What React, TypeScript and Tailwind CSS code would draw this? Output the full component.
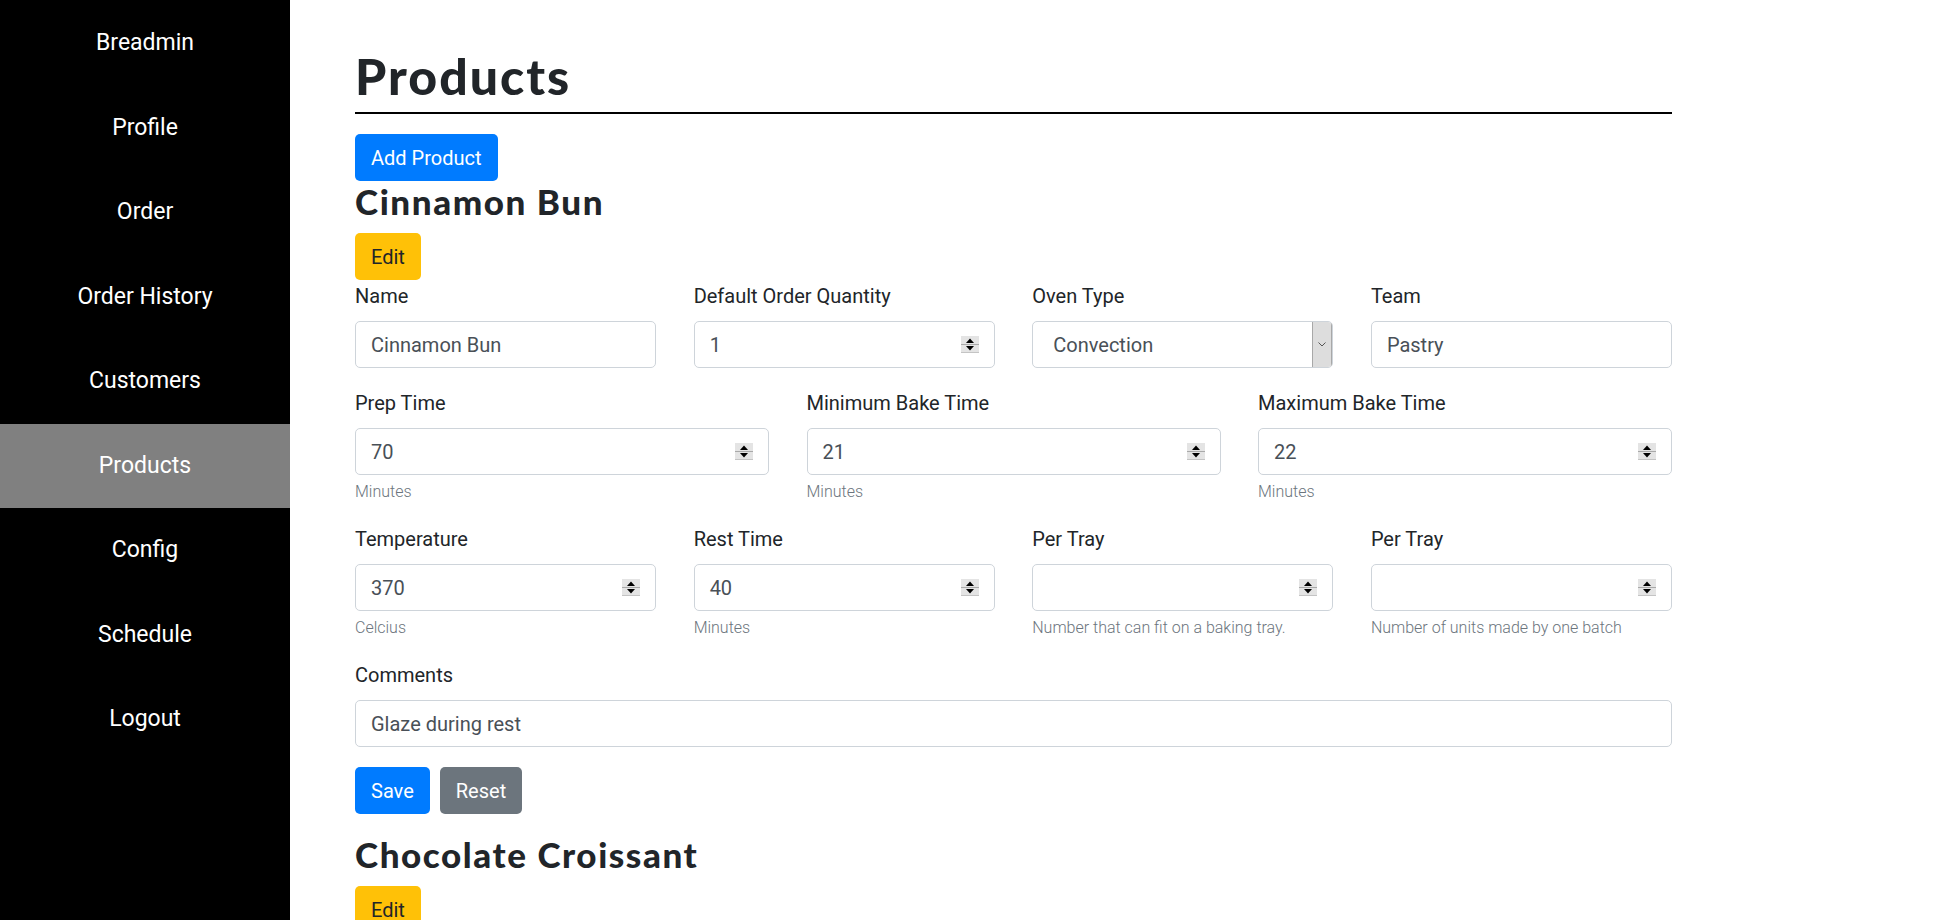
import React from 'react';

const navItems = ['Breadmin', 'Profile', 'Order', 'Order History', 'Customers', 'Products', 'Config', 'Schedule', 'Logout'];

function Spinner() {
  return (
    <svg width="18" height="17" viewBox="0 0 18 17" className="shrink-0">
      <rect x="0" y="0" width="18" height="17" fill="#e4e4e4" />
      <rect x="0" y="8" width="18" height="1" fill="#a9a9a9" />
      <rect x="0" y="16" width="18" height="1" fill="#c4c4c4" />
      <polygon points="5,7 13,7 9,2.5" fill="#000" />
      <polygon points="5,10 13,10 9,14.5" fill="#000" />
    </svg>
  );
}

interface FieldProps {
  label: string;
  value?: string;
  number?: boolean;
  help?: string;
}

function Field({ label, value = '', number, help }: FieldProps) {
  return (
    <div className="mb-[20px]">
      <label className="block text-[20px] leading-[30px] mb-[10px] text-[#212529]">{label}</label>
      <div className="h-[47px] border border-[#ced4da] rounded-[5px] pl-[15px] pr-[15px] flex items-center bg-white">
        <span className="flex-1 text-[20px] text-[#495057]">{value}</span>
        {number && <Spinner />}
      </div>
      {help && (
        <div className="mt-[5px] text-[16px] leading-[24px] font-light text-[#6c757d]">{help}</div>
      )}
    </div>
  );
}

function SelectField({ label, value }: { label: string; value: string }) {
  return (
    <div className="mb-[20px]">
      <label className="block text-[20px] leading-[30px] mb-[10px] text-[#212529]">{label}</label>
      <div className="h-[47px] border border-[#ced4da] rounded-[5px] flex items-stretch overflow-hidden bg-white">
        <span className="flex-1 flex items-center pl-[20px] text-[20px] text-[#495057]">{value}</span>
        <div className="w-[20px] bg-[#dddddd] border-l border-r border-[#a8a8a8] flex items-center justify-center">
          <svg width="8" height="5" viewBox="0 0 8 5">
            <path d="M0.5 0.5 L4 4 L7.5 0.5" stroke="#555" strokeWidth="1" fill="none" />
          </svg>
        </div>
      </div>
    </div>
  );
}

function Btn({ children, color }: { children: React.ReactNode; color: 'blue' | 'yellow' | 'gray' }) {
  const styles = {
    blue: 'bg-[#007bff] text-white',
    yellow: 'bg-[#ffc107] text-[#212529]',
    gray: 'bg-[#6c757d] text-white',
  };
  return (
    <button className={`h-[47px] px-[16px] rounded-[5px] text-[20px] leading-[30px] ${styles[color]}`}>
      {children}
    </button>
  );
}

export default function App() {
  const heading = { fontFamily: 'Lato, "Noto Sans", sans-serif' };
  return (
    <div className="flex min-h-[920px] bg-white" style={{ fontFamily: 'Roboto, "Liberation Sans", sans-serif' }}>
      <nav className="w-[290px] shrink-0 bg-black pt-[1px]">
        {navItems.map((item) => (
          <div
            key={item}
            className={`h-[84.5px] flex items-center justify-center text-[23px] text-white ${item === 'Products' ? 'bg-[#808080]' : ''}`}
          >
            {item}
          </div>
        ))}
      </nav>

      <main className="flex-1 pl-[65px] pt-[46px]">
        <div className="w-[1317px]">
          <h1
            className="text-[50px] leading-[60px] font-black tracking-[0.04em] text-[#212529] border-b-2 border-black pb-[6px] mb-[20px]"
            style={heading}
          >
            Products
          </h1>
          <Btn color="blue">Add Product</Btn>

          <h3
            className="text-[35px] leading-[36px] pt-[2px] font-black tracking-[0.045em] text-[#212529] mb-[14px]"
            style={heading}
          >
            Cinnamon Bun
          </h3>
          <Btn color="yellow">Edit</Btn>

          <form className="mb-[20px] pt-[1px]">
            <div className="grid grid-cols-4 gap-x-[37.5px]">
              <Field label="Name" value="Cinnamon Bun" />
              <Field label="Default Order Quantity" value="1" number />
              <SelectField label="Oven Type" value="Convection" />
              <Field label="Team" value="Pastry" />
            </div>
            <div className="grid grid-cols-3 gap-x-[37.5px]">
              <Field label="Prep Time" value="70" number help="Minutes" />
              <Field label="Minimum Bake Time" value="21" number help="Minutes" />
              <Field label="Maximum Bake Time" value="22" number help="Minutes" />
            </div>
            <div className="grid grid-cols-4 gap-x-[37.5px]">
              <Field label="Temperature" value="370" number help="Celcius" />
              <Field label="Rest Time" value="40" number help="Minutes" />
              <Field label="Per Tray" number help="Number that can fit on a baking tray." />
              <Field label="Per Tray" number help="Number of units made by one batch" />
            </div>
            <Field label="Comments" value="Glaze during rest" />
            <div className="flex gap-[10px]">
              <Btn color="blue">Save</Btn>
              <Btn color="gray">Reset</Btn>
            </div>
          </form>

          <h3
            className="text-[35px] leading-[36px] pt-[2px] font-black tracking-[0.045em] text-[#212529] mb-[14px]"
            style={heading}
          >
            Chocolate Croissant
          </h3>
          <Btn color="yellow">Edit</Btn>
        </div>
      </main>
    </div>
  );
}
